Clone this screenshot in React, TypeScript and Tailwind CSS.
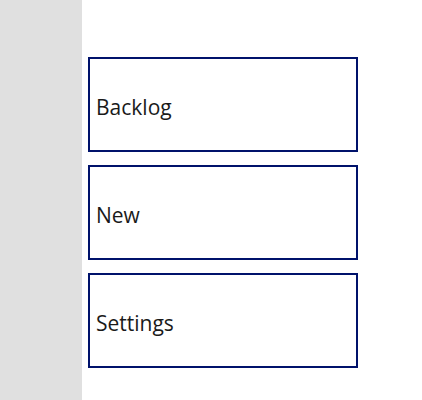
import React from 'react';

const items = ['Backlog', 'New', 'Settings'];

export default function App() {
  return (
    <div className="flex w-[422px] h-[400px] bg-white overflow-hidden" style={{ fontFamily: '"Open Sans", "Noto Sans", sans-serif' }}>
      {/* Left rail */}
      <div className="w-[82px] h-full bg-[#e0e0e0] shrink-0" />

      {/* Menu buttons */}
      <div className="flex flex-col gap-[13px] pt-[57px] pl-[6px]">
        {items.map((label) => (
          <div
            key={label}
            className="w-[270px] h-[95px] border-2 border-[#00126b] flex items-center pl-[6px] pt-[6px] text-[21px] text-[#1a1a1a]"
          >
            {label}
          </div>
        ))}
      </div>
    </div>
  );
}
